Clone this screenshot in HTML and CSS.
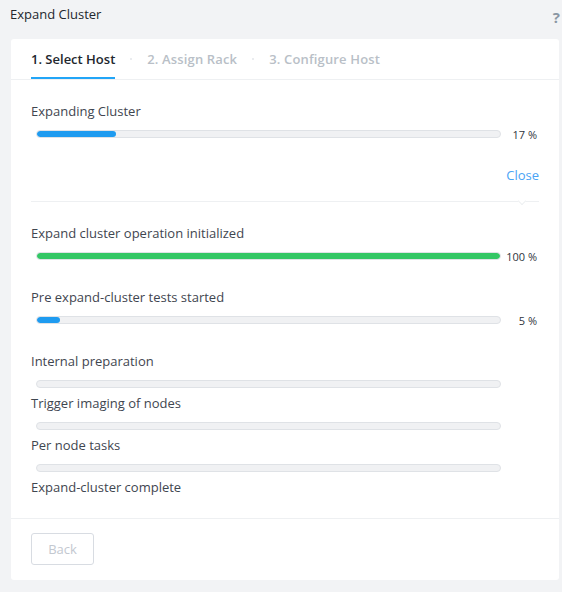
FILE: index.html
```html
<!DOCTYPE html>
<html lang="en">
<head>
<meta charset="utf-8">
<title>Expand Cluster</title>
<link rel="stylesheet" href="styles.css">
</head>
<body>
<div class="topbar">
  <h1 class="title">Expand Cluster</h1>
  <span class="help">?</span>
</div>
<div class="card">
  <nav class="tabs">
    <span class="tab tab--active">1. Select Host</span>
    <span class="tab-sep"></span>
    <span class="tab">2. Assign Rack</span>
    <span class="tab-sep"></span>
    <span class="tab">3. Configure Host</span>
  </nav>
  <div class="body">
    <div class="step step--status">
      <div class="step-label">Expanding Cluster</div>
      <div class="step-row">
        <div class="bar"><div class="fill fill--blue" style="width:17%"></div></div>
        <span class="pct">17 %</span>
      </div>
    </div>
    <div class="close-row">
      <a class="close">Close</a>
    </div>
    <div class="divider"><span class="notch"></span></div>
    <div class="step step--status">
      <div class="step-label">Expand cluster operation initialized</div>
      <div class="step-row">
        <div class="bar"><div class="fill fill--green" style="width:100%"></div></div>
        <span class="pct">100 %</span>
      </div>
    </div>
    <div class="step step--status">
      <div class="step-label">Pre expand-cluster tests started</div>
      <div class="step-row">
        <div class="bar"><div class="fill fill--blue" style="width:5%"></div></div>
        <span class="pct">5 %</span>
      </div>
    </div>
    <div class="step">
      <div class="step-label">Internal preparation</div>
      <div class="step-row">
        <div class="bar"></div>
        <span class="pct"></span>
      </div>
    </div>
    <div class="step">
      <div class="step-label">Trigger imaging of nodes</div>
      <div class="step-row">
        <div class="bar"></div>
        <span class="pct"></span>
      </div>
    </div>
    <div class="step">
      <div class="step-label">Per node tasks</div>
      <div class="step-row">
        <div class="bar"></div>
        <span class="pct"></span>
      </div>
    </div>
    <div class="step step--last">
      <div class="step-label">Expand-cluster complete</div>
    </div>
  </div>
  <div class="footer">
    <button class="btn" type="button">Back</button>
  </div>
</div>
</body>
</html>
```
FILE: styles.css
```css
* { box-sizing: border-box; }
html, body { margin: 0; padding: 0; }
body {
  background: #f2f3f5;
  font-family: "Open Sans", "Liberation Sans", sans-serif;
  font-size: 13px;
  color: #444b55;
  width: 562px;
  height: 592px;
  overflow: hidden;
}
.topbar {
  display: flex;
  justify-content: space-between;
  align-items: flex-start;
  height: 39px;
  padding: 4px 2px 0 10px;
}
.title {
  margin: 0;
  font-size: 13px;
  font-weight: 400;
  line-height: 20px;
  color: #22272e;
}
.help {
  font-size: 15px;
  font-weight: 700;
  color: #8a96a3;
  line-height: 20px;
  margin-top: 3px;
}
.card {
  margin: 0 3px 0 11px;
  background: #fff;
  border-radius: 3px;
  height: 541px;
  display: flex;
  flex-direction: column;
}
.tabs {
  display: flex;
  align-items: stretch;
  height: 41px;
  padding: 0 20px;
  border-bottom: 1px solid #eef0f2;
}
.tab {
  display: flex;
  align-items: center;
  padding-top: 2px;
  font-size: 13px;
  font-weight: 600;
  color: #b9bfc7;
  letter-spacing: 0.15px;
  border-bottom: 2px solid transparent;
}
.tab--active {
  color: #22272e;
  letter-spacing: 0;
  border-bottom-color: #22a5f7;
}
.tab-sep {
  align-self: center;
  width: 2px;
  height: 2px;
  margin: 0 15px;
  border-radius: 1px;
  background: #e3e6ea;
}
.body {
  flex: 1;
  padding: 21px 20px 0 20px;
}
.step { margin-bottom: 1px; }
.step--status { margin-bottom: 23px; }
.step-label {
  line-height: 20px;
  height: 20px;
  color: #3f4650;
}
.step-row {
  display: flex;
  align-items: center;
  height: 16px;
  margin-top: 5px;
}
.bar {
  width: 465px;
  height: 8px;
  margin-left: 5px;
  background: #f0f1f3;
  border: 1px solid #dfe2e6;
  border-radius: 4px;
  overflow: hidden;
  display: flex;
}
.fill {
  height: 100%;
  border-radius: 4px;
}
.fill--blue { background: #1e9bf0; }
.fill--green { background: #33c765; }
.pct {
  flex: 1;
  text-align: right;
  padding-right: 2px;
  font-size: 11px;
  color: #2f353d;
}
.close-row {
  display: flex;
  justify-content: flex-end;
  height: 20px;
  line-height: 20px;
}
.close {
  color: #4aa3f5;
  font-size: 13px;
  cursor: pointer;
}
.divider {
  position: relative;
  margin-top: 16px;
  margin-bottom: 21px;
  border-top: 1px solid #eef0f2;
}
.notch {
  position: absolute;
  left: 488px;
  top: -4px;
  width: 6px;
  height: 6px;
  background: #fff;
  border-right: 1px solid #eef0f2;
  border-bottom: 1px solid #eef0f2;
  transform: rotate(45deg);
}
.footer {
  border-top: 1px solid #eef0f2;
  padding: 14px 20px 15px;
}
.btn {
  width: 63px;
  height: 32px;
  background: #fff;
  border: 1px solid #d8dce2;
  border-radius: 3px;
  font-family: inherit;
  font-size: 13px;
  color: #c3c8d0;
  padding: 0;
}
```
